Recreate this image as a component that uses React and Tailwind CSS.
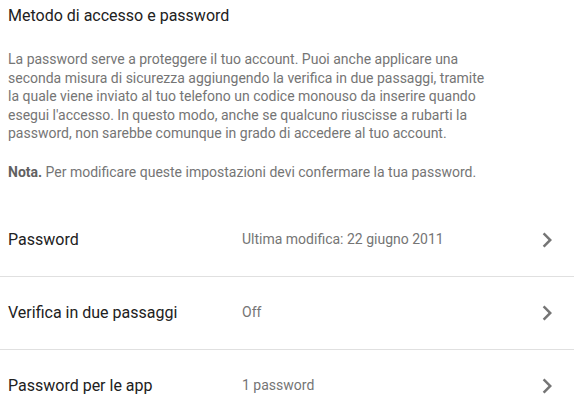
import React from "react";

function Chevron() {
  return (
    <svg width="30" height="30" viewBox="0 0 24 24" className="shrink-0">
      <path d="M10 6L8.59 7.41 13.17 12l-4.58 4.59L10 18l6-6z" fill="#757575" />
    </svg>
  );
}

const rows = [
  { label: "Password", value: "Ultima modifica: 22 giugno 2011" },
  { label: "Verifica in due passaggi", value: "Off" },
  { label: "Password per le app", value: "1 password" },
];

export default function App() {
  return (
    <div className="w-[574px] h-[414px] overflow-hidden bg-white" style={{ fontFamily: "Roboto, 'Noto Sans', sans-serif" }}>
      <div className="px-2 pt-[6px]">
        <h1 className="text-[16px] leading-[20px] text-[#212121]">Metodo di accesso e password</h1>
        <p className="mt-[24px] text-[14px] leading-[18.6px] text-[#757575]">
          La password serve a proteggere il tuo account. Puoi anche applicare una
          <br />
          seconda misura di sicurezza aggiungendo la verifica in due passaggi, tramite
          <br />
          la quale viene inviato al tuo telefono un codice monouso da inserire quando
          <br />
          esegui l'accesso. In questo modo, anche se qualcuno riuscisse a rubarti la
          <br />
          password, non sarebbe comunque in grado di accedere al tuo account.
        </p>
        <p className="mt-[20px] text-[14px] leading-[18.6px] text-[#757575]">
          <span className="font-bold text-[#616161]">Nota.</span> Per modificare queste impostazioni devi confermare la tua password.
        </p>
      </div>
      <div className="mt-[22px]">
        {rows.map((r) => (
          <div key={r.label} className="flex items-center h-[73px] border-b border-[#e0e0e0] pl-2 pr-[12px]">
            <div className="w-[234px] text-[16px] text-[#212121]">{r.label}</div>
            <div className="flex-1 text-[14px] text-[#757575]">{r.value}</div>
            <Chevron />
          </div>
        ))}
      </div>
    </div>
  );
}
